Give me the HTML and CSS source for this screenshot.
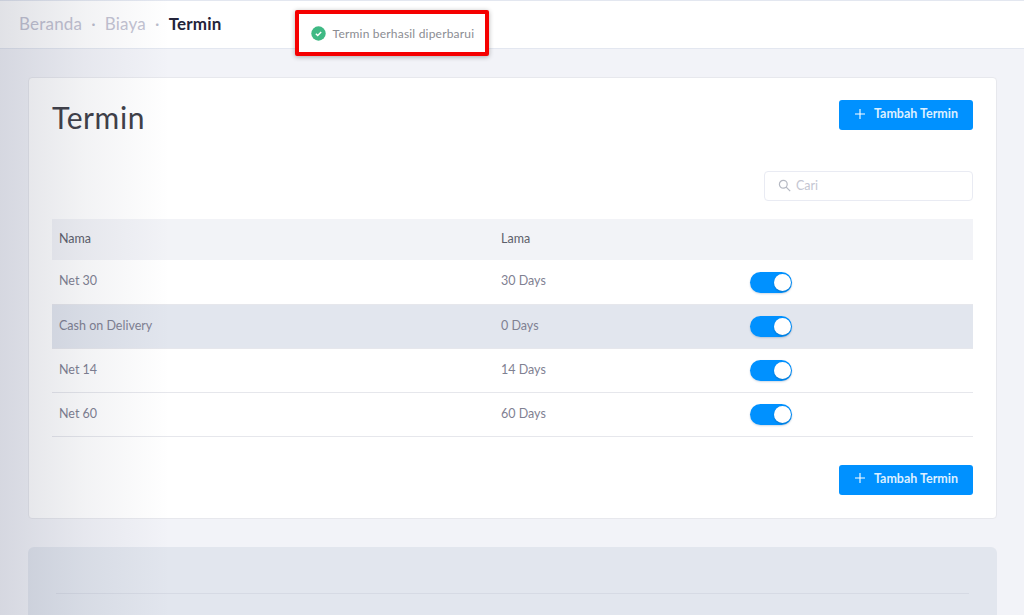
FILE: index.html
```html
<!DOCTYPE html>
<html lang="id">
<head>
    <meta charset="UTF-8">
    <meta name="viewport" content="width=device-width, initial-scale=1.0">
    <title>Termin</title>
    <link rel="stylesheet" href="styles.css">
</head>
<body>
    <header class="topbar">
        <nav class="breadcrumb">
            <span class="crumb">Beranda</span>
            <span class="dot">·</span>
            <span class="crumb">Biaya</span>
            <span class="dot">·</span>
            <span class="crumb-current">Termin</span>
        </nav>
        <div class="toast">
            <svg class="toast-icon" width="15" height="15" viewBox="0 0 15 15">
                <circle cx="7.5" cy="7.5" r="7.2" fill="#3fb984"/>
                <path d="M4.8 7.7l1.9 1.8 3.5-3.6" fill="none" stroke="#fff" stroke-width="1.4"/>
            </svg>
            <span>Termin berhasil diperbarui</span>
        </div>
    </header>

    <main class="content">
        <section class="card">
            <div class="card-head">
                <h1>Termin</h1>
                <button class="btn-add">
                    <svg width="12" height="12" viewBox="0 0 12 12"><path d="M6 1v10M1 6h10" stroke="#fff" stroke-width="1.1"/></svg>
                    Tambah Termin
                </button>
            </div>

            <div class="search-row">
                <div class="search">
                    <svg width="13" height="13" viewBox="0 0 13 13" fill="none" stroke="#b4b8c2" stroke-width="1.2">
                        <circle cx="5.3" cy="5.3" r="3.9"/>
                        <path d="M8.2 8.2l4 4"/>
                    </svg>
                    <span>Cari</span>
                </div>
            </div>

            <table class="termin-table">
                <tr class="head-row">
                    <th class="col-name">Nama</th>
                    <th class="col-days">Lama</th>
                    <th></th>
                </tr>
                <tr>
                    <td>Net 30</td>
                    <td>30 Days</td>
                    <td><span class="switch"></span></td>
                </tr>
                <tr class="hovered">
                    <td>Cash on Delivery</td>
                    <td>0 Days</td>
                    <td><span class="switch"></span></td>
                </tr>
                <tr>
                    <td>Net 14</td>
                    <td>14 Days</td>
                    <td><span class="switch"></span></td>
                </tr>
                <tr>
                    <td>Net 60</td>
                    <td>60 Days</td>
                    <td><span class="switch"></span></td>
                </tr>
            </table>

            <div class="card-foot">
                <button class="btn-add">
                    <svg width="12" height="12" viewBox="0 0 12 12"><path d="M6 1v10M1 6h10" stroke="#fff" stroke-width="1.1"/></svg>
                    Tambah Termin
                </button>
            </div>
        </section>

        <section class="card-muted">
            <div class="muted-line"></div>
        </section>
    </main>

    <div class="side-shade"></div>
</body>
</html>
```

FILE: styles.css
```css
* {
    box-sizing: border-box;
}
html, body {
    height: 615px;
    overflow: hidden;
}
body {
    margin: 0;
    font-family: "Lato", "Noto Sans", sans-serif;
    background: #f2f3f8;
    color: #7f8192;
}
.topbar {
    display: flex;
    height: 49px;
    padding-left: 19px;
    background: #fff;
    border-top: 1px solid #e3e7f0;
    border-bottom: 1px solid #e3e7f0;
}
.breadcrumb {
    display: flex;
    align-items: baseline;
    gap: 9px;
    padding-top: 12px;
    font-size: 17px;
    line-height: 22px;
    letter-spacing: 0.2px;
    color: #c3c3d2;
}
.dot {
    color: #b9bccb;
}
.crumb-current {
    color: #24243a;
    font-weight: 700;
}
.toast {
    display: flex;
    align-items: center;
    gap: 7px;
    width: 194px;
    height: 46px;
    margin: 9px 0 0 73px;
    padding-left: 12px;
    background: #fff;
    border: 4px solid #f50000;
    box-shadow: 0 1px 5px rgba(0, 0, 0, 0.3);
    border-radius: 2px;
    font-size: 12px;
    letter-spacing: 0.2px;
    color: #8b8c92;
    z-index: 2;
}
.toast-icon {
    flex-shrink: 0;
}
.content {
    padding: 28px 27px 0 28px;
}
.card {
    height: 442px;
    padding: 22px 23px;
    background: #fff;
    border: 1px solid #e7e8ed;
    border-radius: 4px;
}
.card-head {
    display: flex;
    justify-content: space-between;
    align-items: flex-start;
}
h1 {
    margin: 0;
    font-size: 30px;
    line-height: 34px;
    font-weight: 400;
    letter-spacing: 0.6px;
    color: #404048;
}
.btn-add {
    display: flex;
    align-items: center;
    justify-content: center;
    gap: 8px;
    width: 134px;
    height: 30px;
    padding: 0 0 3px;
    background: #0091ff;
    border: none;
    border-radius: 3px;
    font-family: inherit;
    font-size: 12.5px;
    font-weight: 700;
    color: #dcefff;
}
.search-row {
    display: flex;
    justify-content: flex-end;
    margin-top: 37px;
    height: 48px;
}
.search {
    display: flex;
    align-items: center;
    gap: 5px;
    width: 209px;
    height: 30px;
    padding-left: 13px;
    padding-bottom: 2px;
    background: #fff;
    border: 1px solid #e9ebf3;
    border-radius: 4px;
    font-size: 12.5px;
    color: #c4c6d2;
}
.termin-table {
    width: 100%;
    border-collapse: collapse;
    font-size: 12.5px;
}
.head-row th {
    height: 41px;
    padding: 0 7px 3px;
    background: #f2f3f7;
    text-align: left;
    font-weight: 400;
    color: #5d5f6b;
}
.col-name {
    width: 442px;
}
.col-days {
    width: 249px;
}
.termin-table td {
    height: 44px;
    padding: 0 7px 2px;
    border-bottom: 1px solid #e6e7ec;
    vertical-align: middle;
}
.hovered td {
    background: #e2e6ee;
}
.switch {
    display: block;
    position: relative;
    width: 42px;
    height: 21px;
    margin-top: 3px;
    background: #0091ff;
    border-radius: 11px;
    box-shadow: 0 1px 2px rgba(0, 60, 120, 0.2);
}
.switch::after {
    content: "";
    position: absolute;
    top: 2px;
    right: 1px;
    width: 17px;
    height: 17px;
    background: #fff;
    border-radius: 50%;
    box-shadow: 0 1px 2px rgba(0, 0, 0, 0.2);
}
.card-foot {
    display: flex;
    justify-content: flex-end;
    margin-top: 28px;
}
.card-muted {
    height: 69px;
    margin-top: 28px;
    padding: 46px 28px 0;
    background: #e2e6ee;
    border-radius: 6px 6px 0 0;
}
.muted-line {
    height: 1px;
    background: #d6dae4;
}
.side-shade {
    position: absolute;
    top: 0;
    left: 0;
    width: 170px;
    height: 615px;
    background: linear-gradient(to right, rgba(40, 48, 80, 0.14), rgba(40, 48, 80, 0.06) 50%, rgba(40, 48, 80, 0));
    pointer-events: none;
}
```
